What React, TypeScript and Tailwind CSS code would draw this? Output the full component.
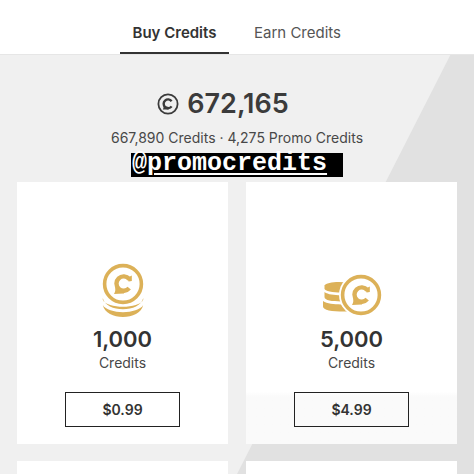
import React, { useState } from "react";

interface CreditPack {
  amount: string;
  price: string;
  icon: React.ReactNode;
  tinted: boolean;
}

const tabs = ["Buy Credits", "Earn Credits"];

function CoinFace({ cx, cy }: { cx: number; cy: number }) {
  return (
    <g transform={`translate(${cx} ${cy})`}>
      <circle r="18.4" fill="#fff" stroke="#dcb158" strokeWidth="3.6" />
      <path d="M6.2 -5 A7.2 7.2 0 1 0 6.2 4.2" fill="none" stroke="#dcb158" strokeWidth="4.4" />
      <path d="M8.8 -8.6 V-3 L5.6 -2.6 L4 -6 Z" fill="#dcb158" />
      <path d="M-8 3 C-7.4 6 -7.6 7.6 -9 10 L1 9.4 V6 Z" fill="#dcb158" />
    </g>
  );
}

function StackedCoin() {
  return (
    <svg viewBox="0 0 44 55" className="h-[55px] w-11" aria-hidden="true">
      <path d="M1.8 36 C5 51 39 51 42.2 36 V38 C38 47 6 47 1.8 38 Z" fill="#dcb158" />
      <path d="M1.8 43 C7 52.5 37 52.5 42.2 43 C39 59 5 59 1.8 43 Z" fill="#dcb158" />
      <circle cx="22" cy="22" r="21.2" fill="#fff" />
      <CoinFace cx={22} cy={22} />
    </svg>
  );
}

function CoinPile() {
  return (
    <svg viewBox="0 0 62 44" className="h-11 w-[62px]" aria-hidden="true">
      <g fill="#dcb158">
        <path d="M3.5 12.5 C5 9.4 18 8 28 10 L20 19.6 C12 19.6 3.5 18.4 3.5 15.6 Z" />
        <path d="M3.5 19 C7 21.6 13 22.2 20 22.2 V28.4 C11 28.4 3.5 27.4 3.5 24 Z" />
        <path d="M2 28 C6 30.6 13 31.4 20 31.4 L26 38.4 C12 38.6 2 37.4 2 33.4 Z" />
      </g>
      <circle cx="40" cy="22" r="22" fill="#fff" />
      <CoinFace cx={40} cy={22} />
    </svg>
  );
}

function BalanceIcon() {
  return (
    <svg viewBox="0 0 22 22" className="size-[22px]" aria-hidden="true">
      <circle cx="11" cy="11" r="9.6" fill="none" stroke="#3b3b3b" strokeWidth="1.8" />
      <path d="M14.6 8.2 A4.4 4.4 0 1 0 14.6 13.4" fill="none" stroke="#3b3b3b" strokeWidth="2.4" />
      <path d="M6.6 13 Q6.8 15 5.8 16.6 L11.6 16.4 V14 Z" fill="#3b3b3b" />
    </svg>
  );
}

const packs: CreditPack[] = [
  { amount: "1,000", price: "$0.99", icon: <StackedCoin />, tinted: false },
  { amount: "5,000", price: "$4.99", icon: <CoinPile />, tinted: true },
];

export default function App() {
  const [activeTab, setActiveTab] = useState("Buy Credits");

  return (
    <div className="flex min-h-screen flex-col bg-white font-['Inter','Liberation_Sans',sans-serif] text-[#3b3b3b]">
      <nav className="flex h-[54px] items-end justify-center gap-3.5 pr-0.5">
        {tabs.map((tab) => (
          <button
            key={tab}
            type="button"
            onClick={() => setActiveTab(tab)}
            className={
              activeTab === tab
                ? "h-9 w-[109px] border-b-2 border-[#333] pb-1 text-[15px] font-semibold whitespace-nowrap text-[#333]"
                : "h-9 w-[109px] border-b-2 border-transparent pb-1 text-[15px] whitespace-nowrap text-[#555]"
            }
          >
            {tab}
          </button>
        ))}
      </nav>

      <main className="relative isolate flex flex-1 flex-col border-t border-[#e6e6e6] bg-[#f0f0f0] px-[17px]">
        <div className="absolute inset-0 -z-10 bg-[#e1e1e1] [clip-path:polygon(95%_0,100%_0,100%_100%,50%_100%)]" />

        <header className="flex h-[127px] flex-col items-center pt-[33px]">
          <h1 className="flex items-center gap-2 pr-7 text-[27px] leading-8 font-semibold">
            <BalanceIcon />
            672,165
          </h1>
          <p className="mt-2 text-sm leading-5 text-[#484848]">667,890 Credits · 4,275 Promo Credits</p>
          <p className="mt-[5px] h-6 w-[212px] bg-black pl-px font-['Liberation_Mono',monospace] text-[25px] leading-[22px] font-bold text-white">
            @<a href="#promocredits" className="underline decoration-2 underline-offset-3">promocredits</a>
          </p>
        </header>

        <section className="grid grid-cols-2 gap-x-[18px]">
          {packs.map((pack) => (
            <article
              key={pack.amount}
              className={
                pack.tinted
                  ? "flex h-[262px] flex-col items-center bg-linear-to-b from-white from-80% to-[#fafafa] to-82% pb-[17px]"
                  : "flex h-[262px] flex-col items-center bg-white pb-[17px]"
              }
            >
              <div className="flex h-[143px] items-end justify-center pb-2">{pack.icon}</div>
              <h2 className="text-[22px] leading-7 font-semibold text-[#333]">{pack.amount}</h2>
              <p className="text-sm leading-5 text-[#484848]">Credits</p>
              <button
                type="button"
                className="mt-auto h-[35px] w-[115px] border border-[#222] text-sm font-semibold text-[#333]"
              >
                {pack.price}
              </button>
            </article>
          ))}
        </section>

        <section className="mt-[17px] grid flex-1 grid-cols-2 gap-x-[18px]">
          <article className="min-h-3 bg-white" />
          <article className="min-h-3 bg-white" />
        </section>
      </main>
    </div>
  );
}
